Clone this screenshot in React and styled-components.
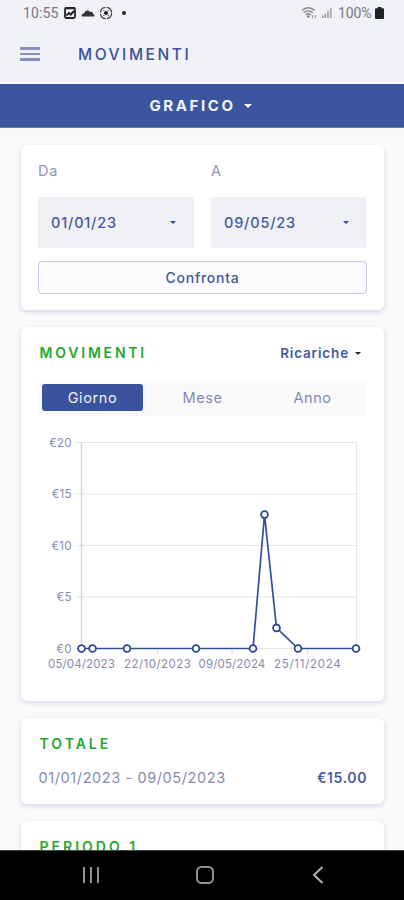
import React from "react";
import styled, { createGlobalStyle } from "styled-components";

const yTicks = [0, 5, 10, 15, 20];

const xTicks = [
  { x: 60.5, label: "05/04/2023" },
  { x: 136.5, label: "22/10/2023" },
  { x: 211, label: "09/05/2024" },
  { x: 286.5, label: "25/11/2024" }
];

const points = [
  { x: 60.5, value: 0 },
  { x: 71.5, value: 0 },
  { x: 106, value: 0 },
  { x: 175, value: 0 },
  { x: 232, value: 0 },
  { x: 243.5, value: 13 },
  { x: 255.5, value: 2 },
  { x: 277, value: 0 },
  { x: 335, value: 0 }
];

const toY = value => 215.5 - value * 10.3;

const StatusBar = () => (
  <StatusContainer>
    <StatusGroup>
      <StatusText $spacing="0.1px">10:55</StatusText>
      <svg width="62" height="14" viewBox="0 0 62 14">
        <rect x="1" y="2" width="10" height="10" rx="1.5" fill="none" stroke="#222328" strokeWidth="1.8" />
        <path d="M1.500 2.300H11M2.500 9.5 5 7l1.700 1.500L10 5" fill="none" stroke="#222328" strokeWidth="2" />
        <path d="M18 10.5c-1-2 .5-3.2 2.3-2.9C20.6 4.5 24 3.2 26 6c2-.6 3.3.5 3 2 1.7 0 1.7 1.8 1 2.5z" fill="#34353b" />
        <circle cx="42" cy="7" r="5.6" fill="none" stroke="#494a50" strokeWidth="1.3" strokeDasharray="7.5 1.3" />
        <circle cx="42" cy="7" r="2.1" fill="#25262a" />
        <path d="M39 4.5h1.5M43.5 4.5H45M39 9.5h1.5M43.5 9.5H45" stroke="#77787e" />
        <circle cx="60" cy="7" r="2" fill="#222328" />
      </svg>
    </StatusGroup>
    <StatusGroup $right>
      <svg width="34" height="14" viewBox="0 0 34 14">
        <g fill="none" stroke="#85868c" strokeWidth="1.3">
          <path d="M1 4.5c3.6-3.7 9-3.7 12.600 0M2.800 6.800c2.700-2.700 6.400-2.700 9 0M4.800 9c1.500-1.500 3.500-1.500 5 0" />
          <path d="M11.500 9v3.500M14.500 9v3" stroke="#a2a3a8" />
        </g>
        <circle cx="7.3" cy="10.500" r="1.200" fill="#77787e" />
        <path d="M21 12V9.500h1.600V12zM23.500 12V7.500h1.600V12z" fill="#9a9ba1" />
        <path d="M26 12V5h1.900v7zM28.800 12V2h2v10z" fill="#acadb3" />
      </svg>
      <StatusText $spacing="-0.1px">100%</StatusText>
      <svg width="9" height="12" viewBox="0 0 9 12">
        <path d="M2.700 0h3.600v1.200H8q1 0 1 1V11q0 1-1 1H1q-1 0-1-1V2.200q0-1 1-1h1.700z" fill="#202126" />
      </svg>
    </StatusGroup>
  </StatusContainer>
);

const Chart = () => (
  <ChartSvg width="362" height="250" viewBox="0 0 362 250">
    {yTicks.map(tick => (
      <g key={tick}>
        <path d={`M55 ${toY(tick)}H335`} stroke="#e5e5e8" />
        <AxisLabel x="50.7" y={toY(tick) + 4.2} textAnchor="end">
          €{tick}
        </AxisLabel>
      </g>
    ))}
    <path d="M335.500 9.500V215.500" stroke="#e5e5e8" />
    <path d="M60.500 9.500V215.500" stroke="#d5d5db" strokeWidth="1.500" />
    {xTicks.map(tick => (
      <g key={tick.label}>
        <path d={`M${tick.x} 215.500v5`} stroke="#d8d8dd" />
        <AxisLabel x={tick.x} y="235.200" textAnchor="middle" textLength="67">
          {tick.label}
        </AxisLabel>
      </g>
    ))}
    <polyline
      points={points.map(p => `${p.x},${toY(p.value)}`).join(" ")}
      fill="none"
      stroke="#344f99"
      strokeWidth="1.700"
    />
    {points.map(p => (
      <circle key={p.x} cx={p.x} cy={toY(p.value)} r="3.400" fill="#fff" stroke="#2a4797" strokeWidth="1.800" />
    ))}
  </ChartSvg>
);

const DateField = ({ label, value }) => (
  <Field>
    <FieldLabel>{label}</FieldLabel>
    <DateButton>
      {value}
      <Caret />
    </DateButton>
  </Field>
);

const App = () => (
  <Screen>
    <GlobalStyle />
    <StatusBar />
    <Header>
      <MenuButton aria-label="Menu">
        <span />
        <span />
        <span />
      </MenuButton>
      <Title>MOVIMENTI</Title>
    </Header>
    <ViewSelect>
      GRAFICO
      <Caret $color="#fff" $size={4.5} />
    </ViewSelect>
    <Content>
      <Card $height={165}>
        <Dates>
          <DateField label="Da" value="01/01/23" />
          <DateField label="A" value="09/05/23" />
        </Dates>
        <CompareButton>Confronta</CompareButton>
      </Card>
      <Card $height={374}>
        <CardHeader>
          <CardTitle $spacing="2.8px">MOVIMENTI</CardTitle>
          <Filter>
            Ricariche
            <Caret $color="#20242e" />
          </Filter>
        </CardHeader>
        <Tabs>
          <Tab $active>Giorno</Tab>
          <Tab>Mese</Tab>
          <Tab>Anno</Tab>
        </Tabs>
        <Chart />
      </Card>
      <Card $height={86}>
        <CardTitle $spacing="3px">TOTALE</CardTitle>
        <TotalRow>
          <span>01/01/2023 - 09/05/2023</span>
          <Amount>€15.00</Amount>
        </TotalRow>
      </Card>
      <Card $height={86}>
        <CardTitle $spacing="3px">PERIODO 1</CardTitle>
      </Card>
    </Content>
    <NavigationBar>
      <svg width="18" height="18" viewBox="0 0 18 18">
        <path d="M2 1v16M9 1v16M16 1v16" stroke="#929292" strokeWidth="2" />
      </svg>
      <svg width="18" height="18" viewBox="0 0 18 18">
        <rect x="1" y="1" width="16" height="16" rx="4.500" fill="none" stroke="#929292" strokeWidth="2" />
      </svg>
      <svg width="18" height="18" viewBox="0 0 18 18">
        <path d="M13.500 1 5 9l8.500 8" fill="none" stroke="#b2b2b2" strokeWidth="2" />
      </svg>
    </NavigationBar>
  </Screen>
);

export default App;

const GlobalStyle = createGlobalStyle`
  * {
    box-sizing: border-box;
  }
  body {
    margin: 0;
    overflow: hidden;
  }
  button {
    border: 0;
    padding: 0;
    background: none;
    font: inherit;
    color: inherit;
    letter-spacing: inherit;
  }
`;

const Screen = styled.div`
  width: 404px;
  height: 900px;
  display: flex;
  flex-direction: column;
  overflow: hidden;
  background: #fafafb;
  font-family: "Inter", "Liberation Sans", sans-serif;
  white-space: nowrap;
`;

// Status bar
const StatusContainer = styled.div`
  height: 26px;
  flex-shrink: 0;
  padding: 0 20px 0 23px;
  display: flex;
  justify-content: space-between;
  background: #f1f2f7;
`;

const StatusGroup = styled.div`
  height: 26px;
  display: flex;
  align-items: center;
  gap: ${props => (props.$right ? "3.5px" : "6px")};
`;

const StatusText = styled.span`
  font-family: Roboto, sans-serif;
  font-size: 14px;
  letter-spacing: ${props => props.$spacing};
  color: #77787f;
`;

// Header
const Header = styled.header`
  height: 58px;
  flex-shrink: 0;
  padding: 0 20px;
  display: flex;
  align-items: center;
  gap: 38px;
  background: #f1f2f7;
  border-bottom: 2px solid #fafbfe;
`;

const MenuButton = styled.button`
  width: 20px;
  display: grid;
  gap: 3px;
  span {
    height: 2.5px;
    background: #8790bd;
  }
`;

const Title = styled.h1`
  margin: 0;
  font-size: 15.5px;
  font-weight: 500;
  letter-spacing: 2.55px;
  color: #3a509b;
`;

const ViewSelect = styled.button`
  && {
    height: 44px;
    flex-shrink: 0;
    display: flex;
    align-items: center;
    justify-content: center;
    gap: 8px;
    padding-right: 3px;
    background: #3b559f;
    border-bottom: 1px solid #6479b4;
    color: #f3f5fc;
    font-size: 15px;
    font-weight: 700;
    letter-spacing: 2.6px;
  }
`;

const Caret = styled.i`
  width: 0;
  height: 0;
  border: ${props => props.$size || 3.5}px solid transparent;
  border-top-color: ${props => props.$color || "#2d459b"};
  border-bottom: 0;
`;

// Cards
const Content = styled.main`
  flex: 1;
  min-height: 0;
  overflow: hidden;
  padding: 17px 20px 0 21px;
  display: flex;
  flex-direction: column;
  gap: 17px;
`;

const Card = styled.section`
  height: ${props => props.$height}px;
  flex-shrink: 0;
  padding: 17px 17px 0;
  border-radius: 6px;
  background: #fff;
  box-shadow: 0 2px 5px rgba(60, 70, 150, 0.2);
`;

const Dates = styled.div`
  display: grid;
  grid-template-columns: 1fr 1fr;
  gap: 17px;
`;

const Field = styled.div`
  display: flex;
  flex-direction: column;
  gap: 17px;
`;

const FieldLabel = styled.label`
  height: 18px;
  line-height: 18px;
  font-size: 14.5px;
  letter-spacing: 0.8px;
  color: #9296b3;
`;

const DateButton = styled.button`
  && {
    height: 51px;
    padding: 0 18px 0 13px;
    display: flex;
    align-items: center;
    justify-content: space-between;
    border-radius: 3px;
    background: #f0f1f5;
    font-size: 14.5px;
    font-weight: 500;
    letter-spacing: 0.8px;
    color: #465aa1;
  }
`;

const CompareButton = styled.button`
  && {
    width: 100%;
    height: 33px;
    margin-top: 13px;
    border: 1.5px solid #c5c9df;
    border-radius: 4px;
    background: #fcfcfe;
    font-size: 14px;
    font-weight: 500;
    letter-spacing: 0.75px;
    color: #4157a0;
  }
`;

const CardHeader = styled.div`
  display: flex;
  justify-content: space-between;
  padding-right: 6px;
`;

const CardTitle = styled.h2`
  height: 18px;
  margin: 0 0 0 1.5px;
  line-height: 18px;
  font-size: 14px;
  font-weight: 600;
  letter-spacing: ${props => props.$spacing};
  color: #24a92c;
`;

const Filter = styled.button`
  && {
    display: flex;
    align-items: center;
    gap: 6px;
    font-size: 13.5px;
    font-weight: 600;
    letter-spacing: 0.85px;
    color: #4056a0;
  }
`;

const Tabs = styled.div`
  height: 36px;
  margin-top: 18px;
  padding: 4px 4px 5px;
  display: grid;
  grid-template-columns: repeat(3, 101px);
  justify-content: space-between;
  background: #fafafb;
`;

const Tab = styled.button`
  && {
    border-radius: 3px;
    background: ${props => (props.$active ? "#3b529f" : "transparent")};
    color: ${props => (props.$active ? "#eef1fc" : "#8289b6")};
    font-size: 14.5px;
    letter-spacing: 0.6px;
  }
`;

const ChartSvg = styled.svg`
  display: block;
  margin: 17px 0 0 -17px;
`;

const AxisLabel = styled.text`
  font-size: 11.5px;
  letter-spacing: 0.2px;
  fill: #858bae;
`;

const TotalRow = styled.div`
  display: flex;
  justify-content: space-between;
  align-items: center;
  height: 20px;
  margin-top: 14px;
  padding-left: 0.5px;
  font-size: 14.5px;
  letter-spacing: 0.6px;
  color: #858bb2;
`;

const Amount = styled.strong`
  font-size: 14px;
  font-weight: 600;
  color: #485b9f;
`;

// Android navigation
const NavigationBar = styled.nav`
  height: 50px;
  flex-shrink: 0;
  padding: 0 0 2px 5px;
  display: flex;
  justify-content: center;
  align-items: center;
  gap: 95.5px;
  border-top: 1px solid #444;
  background: #000;
`;
